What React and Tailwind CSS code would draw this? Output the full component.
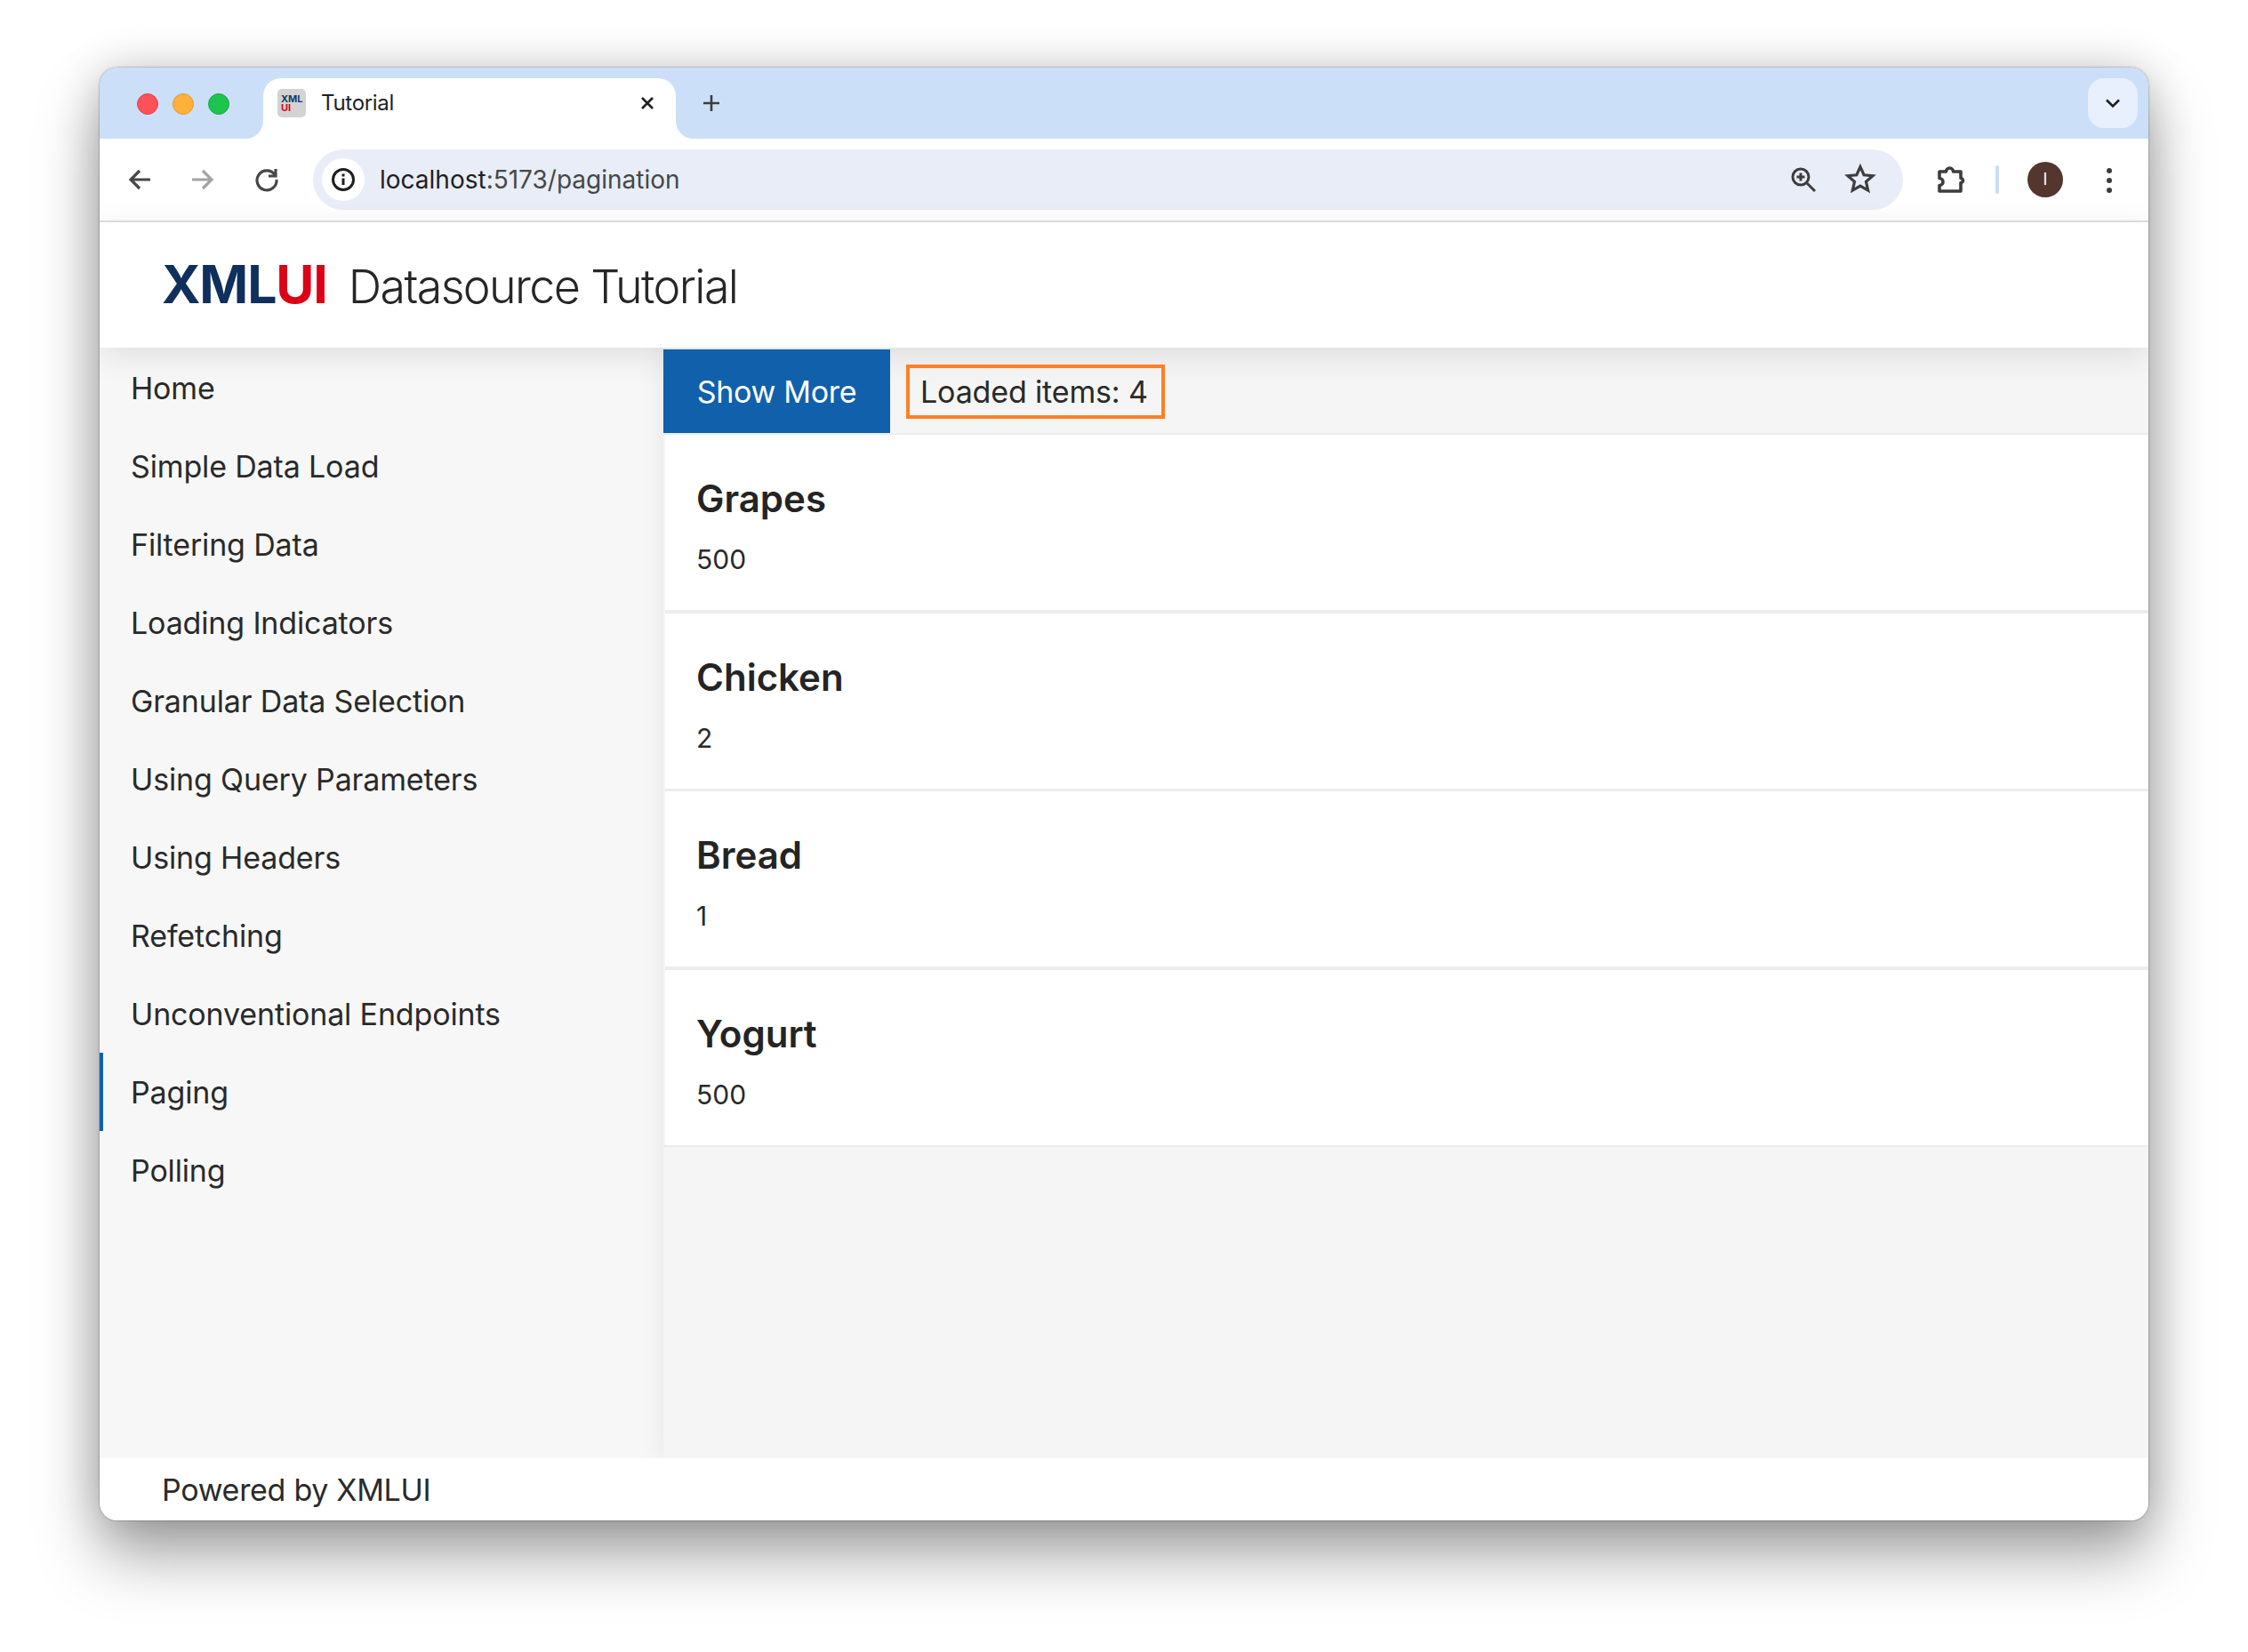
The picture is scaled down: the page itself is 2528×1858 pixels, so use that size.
const nav = ["Home","Simple Data Load","Filtering Data","Loading Indicators","Granular Data Selection","Using Query Parameters","Using Headers","Refetching","Unconventional Endpoints","Paging","Polling"];
const cards = [["Grapes","500"],["Chicken","2"],["Bread","1"],["Yogurt","500"]];

function Flare({ side }) {
  return (
    <span className={side === "l" ? "absolute bottom-0 -left-5 w-5 h-5 bg-white" : "absolute bottom-0 -right-5 w-5 h-5 bg-white"}>
      <span className={side === "l" ? "block w-5 h-5 bg-[#cbdff9] rounded-br-[20px]" : "block w-5 h-5 bg-[#cbdff9] rounded-bl-[20px]"} />
    </span>
  );
}

function Tabs() {
  return (
    <div className="flex h-[80px] bg-[#cbdff9] rounded-t-[20px] pt-[12px] shrink-0">
      <div className="flex items-center gap-[16px] h-[58px] pl-[42px] w-[184px] shrink-0">
        <span className="w-[24px] h-[24px] rounded-full bg-[#ff5157] border border-[#e0464c]" />
        <span className="w-[24px] h-[24px] rounded-full bg-[#ffb03b] border border-[#e09a30]" />
        <span className="w-[24px] h-[24px] rounded-full bg-[#1fc44f] border border-[#1aab44]" />
      </div>
      <div className="relative flex items-center w-[464px] h-[68px] bg-white rounded-t-[20px] pl-[16px] pb-[12px] shrink-0">
        <Flare side="l" />
        <Flare side="r" />
        <span className="flex flex-col justify-center w-[32px] h-[32px] bg-[#d3d3d3] rounded-[5px] pl-[4px] font-['Inter'] font-bold text-[11px] leading-[10px] shrink-0">
          <span className="text-[#123a6b]">XML</span>
          <span className="text-[#dc0017]">UI</span>
        </span>
        <span className="ml-[17px] text-[24px] tracking-[-0.3px] text-[#1f1f1f] leading-none">Tutorial</span>
        <svg className="ml-auto mr-[23px]" width="18" height="18" viewBox="0 0 18 18" fill="none" stroke="#1f1f1f" strokeWidth="2.6"><path d="M3 3 15 15M15 3 3 15" /></svg>
      </div>
      <div className="flex items-center justify-center w-[80px] h-[56px] shrink-0">
        <svg width="22" height="22" viewBox="0 0 22 22" fill="none" stroke="#3d3d3d" strokeWidth="2.6"><path d="M11 2v18M2 11h18" /></svg>
      </div>
      <div className="ml-auto mr-[12px] flex items-center justify-center w-[56px] h-[56px] bg-[#e8effd] rounded-[18px]">
        <svg width="18" height="12" viewBox="0 0 18 12" fill="none" stroke="#1f1f1f" strokeWidth="2.6"><path d="M2 2.5 9 9.5 16 2.5" /></svg>
      </div>
    </div>
  );
}

function Toolbar() {
  return (
    <div className="relative flex items-center h-[94px] bg-white rounded-t-[20px] border-b-2 border-[#e1e1e1] shrink-0">
      <svg className="absolute left-[30px] top-[31px]" width="30" height="30" viewBox="0 0 30 30" fill="none" stroke="#474747" strokeWidth="3.2"><path d="M27 15H5M15 5 5 15l10 10" /></svg>
      <svg className="absolute left-[101px] top-[31px]" width="30" height="30" viewBox="0 0 30 30" fill="none" stroke="#a3a3a3" strokeWidth="3.2"><path d="M3 15h22M15 5l10 10-10 10" /></svg>
      <svg className="absolute left-[173px] top-[31px]" width="30" height="30" viewBox="0 0 30 30" fill="none" stroke="#474747" strokeWidth="3.2"><path d="M24 9.5A11 11 0 1 0 26 15" /><path d="M25 3v8h-8" /></svg>
      <div className="absolute left-[240px] top-[12px] flex items-center w-[1788px] h-[68px] bg-[#e8edf7] rounded-full pl-[10px]">
        <span className="flex items-center justify-center w-[48px] h-[48px] bg-white rounded-full">
          <svg width="28" height="28" viewBox="0 0 28 28" fill="none" stroke="#1f1f1f" strokeWidth="3"><circle cx="14" cy="14" r="11.5" /><path d="M14 12.5V20M14 7.5v3" /></svg>
        </span>
        <span className="ml-[17px] text-[28px] text-[#1f1f1f] leading-none">localhost<span className="text-[#474747]">:5173/pagination</span></span>
        <svg className="absolute left-[1661px] top-[19px]" width="30" height="30" viewBox="0 0 30 30" fill="none" stroke="#3d3d3d" strokeWidth="3"><circle cx="12" cy="12" r="9" /><path d="M18.5 18.5 28 28M12 7.5v9M7.5 12h9" /></svg>
        <svg className="absolute left-[1721px] top-[14px]" width="38" height="38" viewBox="0 0 24 24" fill="none" stroke="#3d3d3d" strokeWidth="2"><path d="M12 3.5l2.6 5.8 6.3.6-4.8 4.2 1.4 6.2-5.5-3.2-5.5 3.2 1.4-6.2-4.8-4.2 6.3-.6z" /></svg>
      </div>
      <svg className="absolute left-[2064px] top-[29px]" width="34" height="34" viewBox="0 0 34 34" fill="none" stroke="#3d3d3d" strokeWidth="3.6" strokeLinejoin="round"><path d="M5 8h7.5a4 4 0 0 1 8 0H29v7.5a2.5 2.5 0 0 1 0 5V30H5v-6.5a4 4 0 0 0 0-8z" /></svg>
      <span className="absolute left-[2132px] top-[30px] w-[4px] h-[32px] bg-[#c9dcf8] rounded-full" />
      <span className="absolute left-[2168px] top-[26px] flex items-center justify-center w-[40px] h-[40px] bg-[#54362f] rounded-full text-white text-[18px] leading-none">I</span>
      <span className="absolute left-[2257px] top-[33px] flex flex-col gap-[5px]">
        <span className="w-[6px] h-[6px] bg-[#3d3d3d] rounded-full" />
        <span className="w-[6px] h-[6px] bg-[#3d3d3d] rounded-full" />
        <span className="w-[6px] h-[6px] bg-[#3d3d3d] rounded-full" />
      </span>
    </div>
  );
}

export default function App() {
  return (
    <div className="w-[2528px] h-[1858px] bg-white pl-[112px] pt-[76px] font-['Inter',sans-serif] overflow-hidden">
      <div className="flex flex-col w-[2304px] h-[1634px] rounded-[20px] bg-white shadow-[0_40px_70px_rgba(0,0,0,0.35),0_0_50px_rgba(0,0,0,0.18),0_0_2px_rgba(0,0,0,0.55)] overflow-hidden">
        <Tabs />
        <Toolbar />
        <header className="relative z-10 flex items-center h-[141px] pl-[70px] pb-[2px] bg-white shadow-[0_8px_36px_rgba(0,0,0,0.1)] shrink-0">
          <div className="flex items-baseline">
            <span className="text-[59px] font-bold leading-none tracking-[-1.2px] text-[#0f2f5c]">XML<span className="text-[#dc0017]">UI</span></span>
            <span className="ml-[24px] text-[52px] font-light leading-none tracking-[-1.6px] text-[#262626]">Datasource Tutorial</span>
          </div>
        </header>
        <div className="flex flex-1 min-h-0 bg-[#f7f7f7]">
          <nav className="w-[634px] shrink-0 pt-[1px]">
            {nav.map((n) => (
              <div key={n} className={n === "Paging" ? "flex items-center h-[88px] pl-[31px] border-l-4 border-[#1160ab] text-[34px] tracking-[-0.15px] text-[#2a2a2a]" : "flex items-center h-[88px] pl-[35px] text-[34px] tracking-[-0.15px] text-[#2a2a2a]"}>{n}</div>
            ))}
          </nav>
          <main className="flex-1 min-w-0 pt-[2px] bg-[#f5f5f5] shadow-[-2px_0_28px_rgba(0,0,0,0.07)]">
            <div className="flex items-center h-[96px] border-b-2 border-[#ececec]">
              <button className="relative z-20 h-[94px] w-[255px] bg-[#1160ab] text-white text-[34px] tracking-[-0.3px]">Show More</button>
              <div className="relative z-20 ml-[18px] flex items-center h-[61px] pl-[12px] pr-[15px] border-4 border-[#ff7f27] text-[34px] tracking-[-0.15px] text-[#2a2a2a]">Loaded items: 4</div>
            </div>
            <div className="pl-[2px] border-b-2 border-[#ececec]">
              <div className="flex flex-col gap-[3.67px] bg-[#ececec]">
                {cards.map(([t, v]) => (
                  <div key={t} className="h-[197px] bg-white pl-[35px] pt-[42px]">
                    <div className="text-[42px] font-semibold leading-[60px] text-[#242424]">{t}</div>
                    <div className="mt-[16px] text-[30px] leading-[44px] text-[#2a2a2a]">{v}</div>
                  </div>
                ))}
              </div>
            </div>
          </main>
        </div>
        <footer className="flex items-center h-[70px] pl-[70px] bg-white text-[34px] tracking-[-0.3px] text-[#2a2a2a] shrink-0">Powered by XMLUI</footer>
      </div>
    </div>
  );
}
